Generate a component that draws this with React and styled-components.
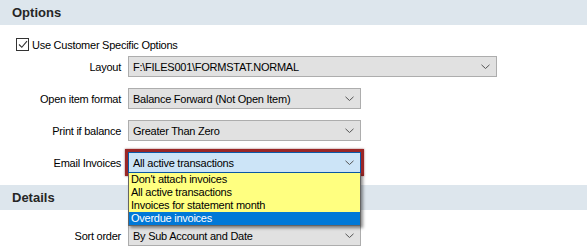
import styled, { createGlobalStyle } from 'styled-components';

const GlobalStyle = createGlobalStyle`
  body {
    margin: 0;
    background: #fff;
    font-family: "Liberation Sans", Arial, sans-serif;
  }
`;

const Panel = styled.div`
  width: 587px;
  height: 251px;
  overflow: hidden;
  background: #fff;
  font-size: 11px;
  letter-spacing: -0.25px;
  color: #000;
`;

const SectionHeader = styled.div`
  height: 25px;
  line-height: 25px;
  padding-left: 12px;
  background: #dde6ed;
  color: #262626;
  font-size: 13px;
  font-weight: bold;
  letter-spacing: 0;
`;

const Section = styled.div`
  display: flex;
  flex-direction: column;
  gap: 11px;
  padding: ${(p) => p.$pad};
`;

const CheckRow = styled.label`
  display: flex;
  align-items: center;
  gap: 3px;
  height: 13px;
  margin-left: 16px;
  margin-bottom: -6px;
`;

const CheckBox = styled.span`
  width: 11px;
  height: 11px;
  border: 1px solid #333;
  background: #fff;
  display: flex;
  align-items: center;
  justify-content: center;
`;

const Row = styled.div`
  display: grid;
  grid-template-columns: 121px auto;
  column-gap: 7px;
  align-items: center;
`;

const Label = styled.span`
  text-align: right;
  white-space: nowrap;
`;

const Ring = styled.div`
  position: relative;
  width: ${(p) => p.$w}px;
  box-shadow: ${(p) =>
    p.$focus ? '0 0 0 3px #9a2626, 0 0 2px 3px rgba(90, 10, 10, 0.6)' : 'none'};
`;

const Select = styled.div`
  box-sizing: border-box;
  height: 21px;
  display: flex;
  align-items: center;
  justify-content: space-between;
  padding: 0 6px 0 4px;
  border: 1px solid ${(p) => (p.$open ? '#0b5aa8' : '#adadad')};
  background: ${(p) => (p.$open ? '#cce4f7' : '#e1e1e1')};
  white-space: nowrap;
`;

const List = styled.div`
  position: absolute;
  left: 0;
  right: 0;
  top: 21px;
  z-index: 2;
  border: 1px solid #646464;
  border-top: none;
  background: #ffff80;
  box-shadow: 2px 2px 3px rgba(0, 0, 0, 0.45);
`;

const Item = styled.div`
  height: 13px;
  line-height: 13px;
  padding-left: 2px;
  background: ${(p) => (p.$active ? '#0078d7' : 'transparent')};
  color: ${(p) => (p.$active ? '#fff' : '#000')};
`;

const Chevron = () => (
  <svg width="9" height="6" viewBox="0 0 9 6">
    <polyline points="0.5,0.8 4.5,4.5 8.5,0.8" fill="none" stroke="#555" strokeWidth="1" />
  </svg>
);

const Field = ({ label, value, width = 233, open, options }) => (
  <Row>
    <Label>{label}</Label>
    <Ring $w={width} $focus={open}>
      <Select $open={open}>
        <span>{value}</span>
        <Chevron />
      </Select>
      {open && (
        <List>
          {options.map((o) => (
            <Item key={o} $active={o === 'Overdue invoices'}>{o}</Item>
          ))}
        </List>
      )}
    </Ring>
  </Row>
);

const emailOptions = [
  "Don't attach invoices",
  'All active transactions',
  'Invoices for statement month',
  'Overdue invoices',
];

export default function App() {
  return (
    <>
      <GlobalStyle />
      <Panel>
        <SectionHeader>Options</SectionHeader>
        <Section $pad="13px 0 12px">
          <CheckRow>
            <CheckBox>
              <svg width="10" height="9" viewBox="0 0 10 9">
                <polyline points="1,4.5 3.8,7.3 9,1.2" fill="none" stroke="#333" strokeWidth="1.1" />
              </svg>
            </CheckBox>
            Use Customer Specific Options
          </CheckRow>
          <Field label="Layout" value="F:\FILES001\FORMSTAT.NORMAL" width={369} />
          <Field label="Open item format" value="Balance Forward (Not Open Item)" />
          <Field label="Print if balance" value="Greater Than Zero" />
          <Field label="Email Invoices" value="All active transactions" open options={emailOptions} />
        </Section>
        <SectionHeader>Details</SectionHeader>
        <Section $pad="15px 0 0">
          <Field label="Sort order" value="By Sub Account and Date" />
        </Section>
      </Panel>
    </>
  );
}
